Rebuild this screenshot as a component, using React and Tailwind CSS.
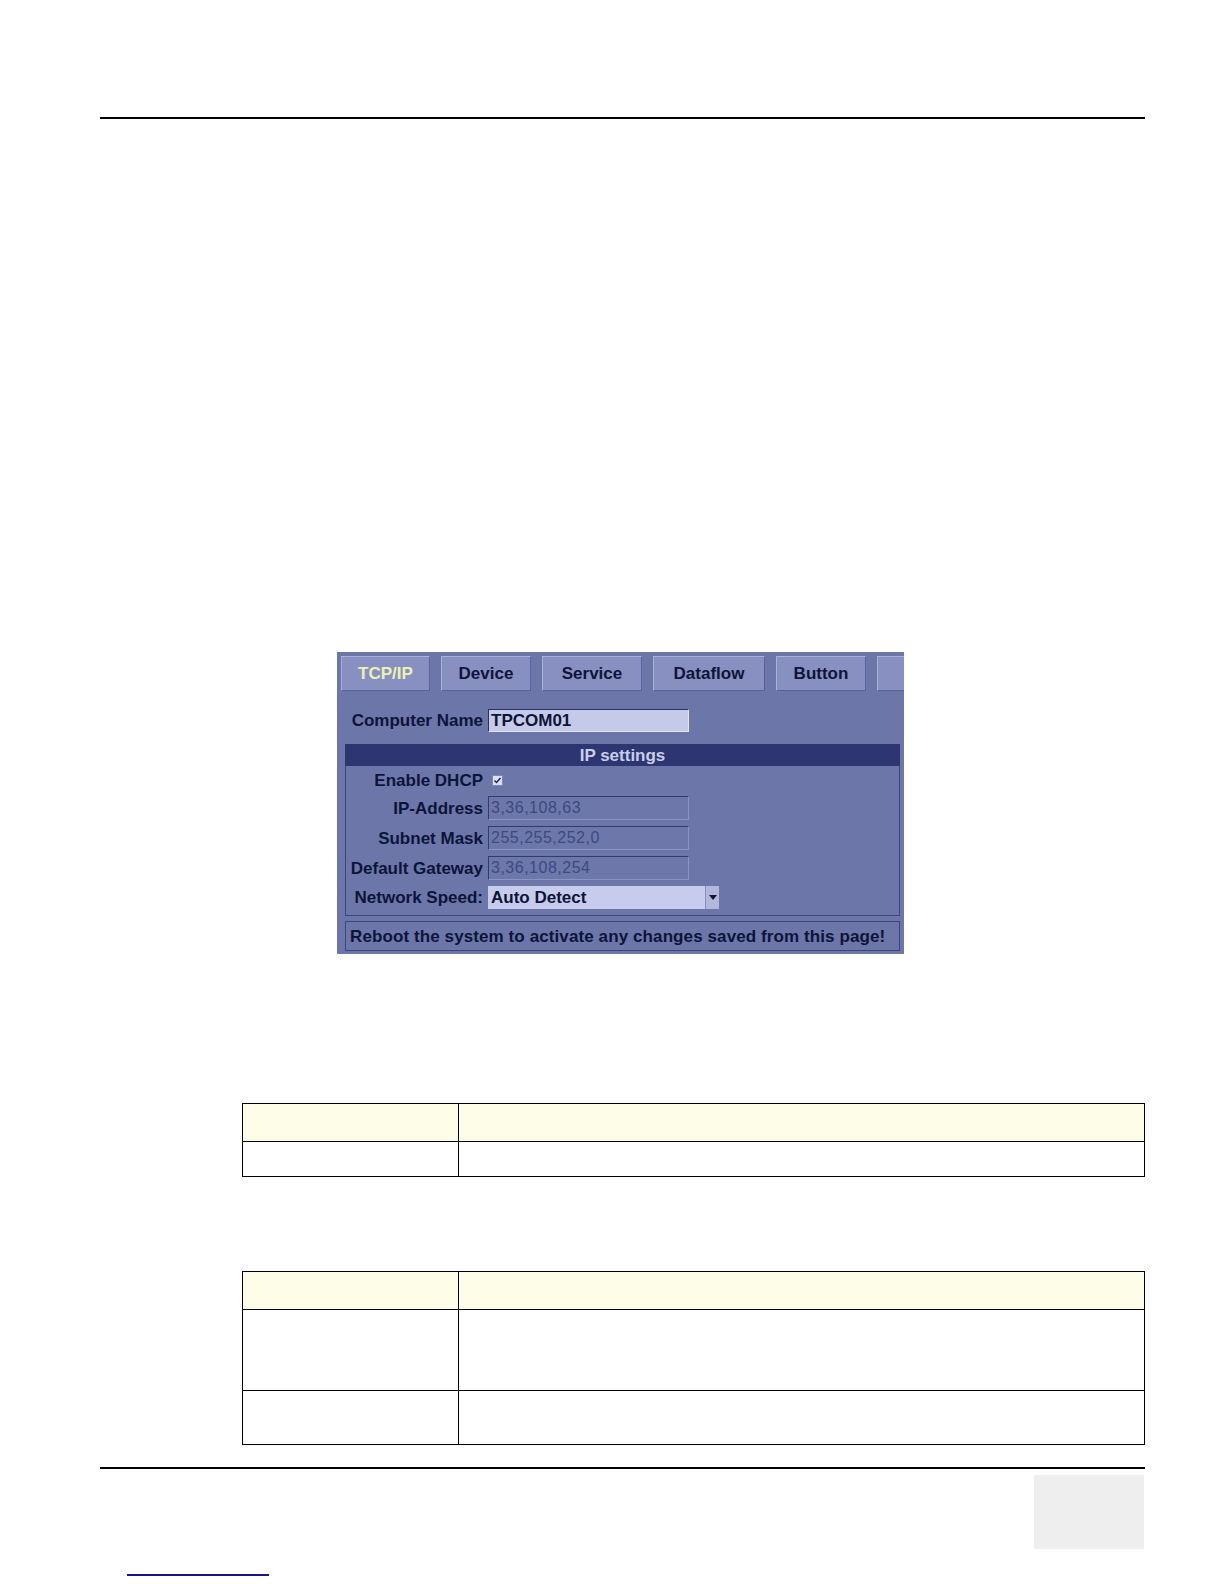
const tabs = [
  { label: 'TCP/IP', width: 'w-[89px]', active: true },
  { label: 'Device', width: 'w-[90px]' },
  { label: 'Service', width: 'w-[100px]' },
  { label: 'Dataflow', width: 'w-[112px]' },
  { label: 'Button', width: 'w-[90px]' },
  { label: '', width: 'w-[90px]' },
]

const ipRows = [
  { label: 'IP-Address', value: '3,36,108,63' },
  { label: 'Subnet Mask', value: '255,255,252,0' },
  { label: 'Default Gateway', value: '3,36,108,254' },
]

const Tab = ({ label, width, active }) => (
  <div
    className={`${width} h-[35px] shrink-0 flex items-center justify-center bg-[#8790c1] border border-t-[#aab2dc] border-l-[#aab2dc] border-b-[#5a639b] border-r-[#5a639b] text-[17px] font-bold leading-none ${active ? 'text-[#eef0b2]' : 'text-[#0e1538]'}`}
  >
    {label}
  </div>
)

const DisabledInput = ({ value }) => (
  <div className="w-[201px] h-[24px] flex items-center px-[2px] bg-[#6d77aa] border border-t-[#323b70] border-l-[#323b70] border-b-[#8a93c5] border-r-[#8a93c5] text-[16px] tracking-[0.5px] text-[#3e4982] leading-none">
    {value}
  </div>
)

const SettingsPanel = () => (
  <div className="mt-[533px] ml-[337px] w-[567px] h-[302px] overflow-hidden bg-[#6c76a8] flex flex-col text-[#0d1438]">
    {/* tabs */}
    <div className="flex gap-[11px] pt-[4px] pl-[4px]">
      {tabs.map((t, i) => (
        <Tab key={i} {...t} />
      ))}
    </div>

    {/* computer name */}
    <div className="flex items-center mt-[18px] h-[23px]">
      <div className="w-[146px] pl-[13px] text-right text-[17px] font-bold leading-none">Computer Name</div>
      <div className="ml-[5px] w-[201px] h-[23px] flex items-center px-[2px] bg-[#c6cae9] border border-t-[#2a3162] border-l-[#2a3162] border-b-[#e2e5f7] border-r-[#e2e5f7] text-[17px] font-bold leading-none">
        TPCOM01
      </div>
    </div>

    {/* IP settings header */}
    <div className="mt-[12px] ml-[8px] w-[555px] h-[22px] bg-[#2d3670] flex items-center justify-center text-[17px] font-bold leading-none text-[#c9cdea]">
      IP settings
    </div>

    {/* group */}
    <div className="ml-[8px] w-[555px] h-[150px] border border-[#3b457e] border-t-0 flex flex-col pt-[2px]">
      <div className="flex items-center h-[24px]">
        <div className="w-[137px] text-right text-[17px] font-bold leading-none">Enable DHCP</div>
        <div className="ml-[9px] w-[11px] h-[11px] bg-[#dde0f2] border border-[#7d86b8] flex items-center justify-center">
          <svg width="9" height="9" viewBox="0 0 9 9">
            <path d="M1.5 4.5 L3.5 6.5 L7.5 2" fill="none" stroke="#1a2150" strokeWidth="1.4" />
          </svg>
        </div>
      </div>
      <div className="flex flex-col gap-[6px] mt-[4px]">
        {ipRows.map((r) => (
          <div key={r.label} className="flex items-center h-[24px]">
            <div className="w-[137px] text-right text-[17px] font-bold leading-none whitespace-nowrap">{r.label}</div>
            <div className="ml-[5px]">
              <DisabledInput value={r.value} />
            </div>
          </div>
        ))}
        <div className="flex items-center h-[23px]">
          <div className="w-[137px] text-right text-[17px] font-bold leading-none whitespace-nowrap">Network Speed:</div>
          <div className="ml-[5px] w-[231px] h-[23px] flex bg-[#c8ccec]">
            <div className="flex-1 flex items-center pl-[3px] text-[17px] font-bold leading-none">Auto Detect</div>
            <div className="w-[14px] bg-[#b3b8da] border-l border-[#8890c0] flex items-center justify-center">
              <svg width="8" height="5" viewBox="0 0 8 5">
                <path d="M0 0 H8 L4 5 Z" fill="#10163a" />
              </svg>
            </div>
          </div>
        </div>
      </div>
    </div>

    {/* reboot note */}
    <div className="mt-[5px] ml-[8px] w-[555px] h-[30px] border border-[#3b457e] flex items-center pl-[4px] text-[17px] tracking-[0.1px] font-bold leading-none whitespace-nowrap">
      Reboot the system to activate any changes saved from this page!
    </div>
  </div>
)

const DocTable = ({ rows, className }) => (
  <div className={`${className} ml-[242px] w-[903px] border border-black`}>
    <div className="flex h-[37px] bg-[#fefee8]">
      <div className="w-[216px] border-r border-black" />
      <div className="flex-1" />
    </div>
    {rows.map((h, i) => (
      <div key={i} className={`flex border-t border-black ${h}`}>
        <div className="w-[216px] border-r border-black" />
        <div className="flex-1" />
      </div>
    ))}
  </div>
)

export default function App() {
  return (
    <div className="w-[1224px] h-[1584px] bg-white flex flex-col font-['Liberation_Sans',Arial,sans-serif]">
      <div className="mt-[117px] ml-[100px] w-[1045px] h-[2px] bg-black" />

      <SettingsPanel />

      <DocTable className="mt-[149px]" rows={['h-[35px]']} />
      <DocTable className="mt-[94px]" rows={['h-[81px]', 'h-[54px]']} />

      <div className="mt-[22px] ml-[100px] w-[1045px] h-[2px] bg-black" />
      <div className="mt-[6px] ml-[1034px] w-[110px] h-[74px] bg-[#eeeeee]" />
      <div className="mt-[25px] ml-[127px] w-[142px] h-[2px] bg-[#15158c]" />
    </div>
  )
}
